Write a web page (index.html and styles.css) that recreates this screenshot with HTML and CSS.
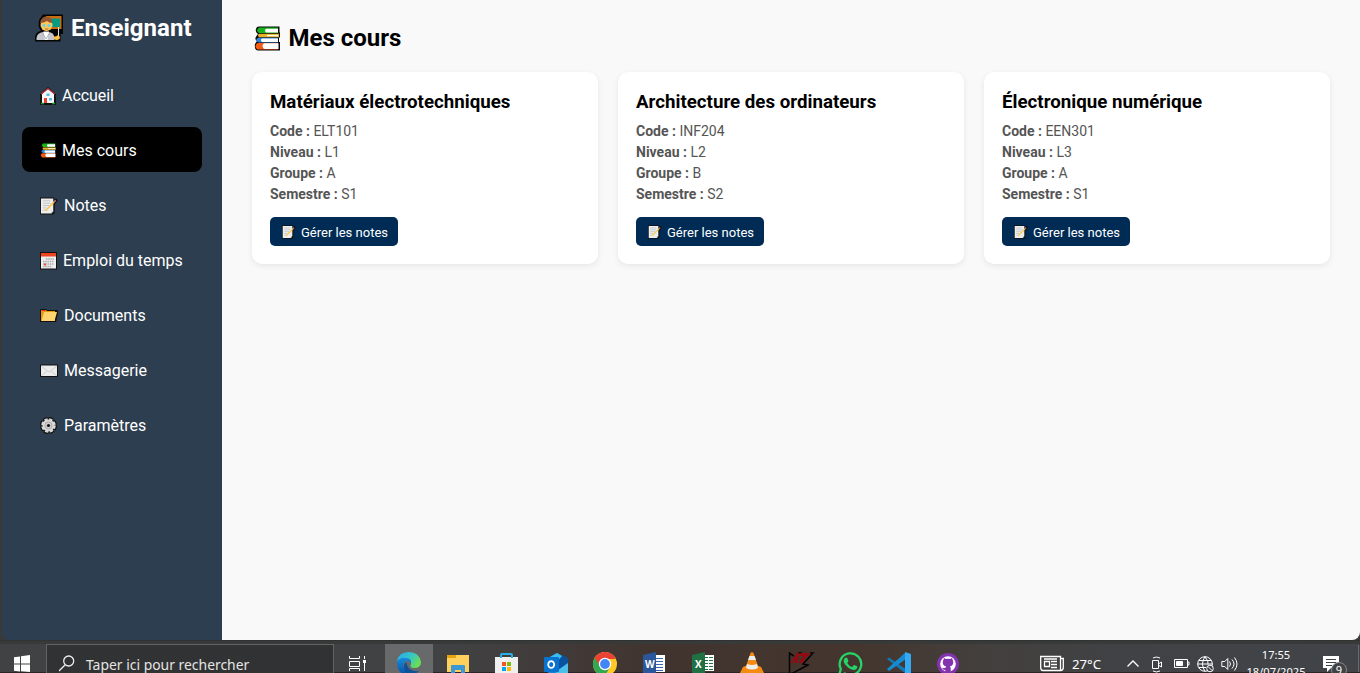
FILE: index.html
```html
<!DOCTYPE html>
<html lang="fr">
<head>
<meta charset="utf-8">
<title>Espace enseignant</title>
<link rel="stylesheet" href="styles.css">
</head>
<body>
<svg class="defs" width="0" height="0" aria-hidden="true">
  <symbol id="books" viewBox="0 0 27 27">
    <path d="M5 1.500H25.500V7.500H26V12.500H25V17H26V25.500H4Q0 25 1 19L3 16Q0 14 2.500 11L4 9Q0 6 3 2Z" fill="#080808"/>
    <path d="M5 2.500H24V8H5Q1 5.500 5 2.500Z" fill="#16b31b"/><path d="M12 3.700H24V7.400H12Q10 5.500 12 3.700Z" fill="#fff"/>
    <path d="M5 8.800H25V12.200H5Q3 10.500 5 8.800Z" fill="#e5b429"/><path d="M13 9.900H24V11.200H13Z" fill="#fffbe7"/>
    <path d="M4 12.700H24V17.500H5Q0 15.500 4 12.700Z" fill="#2d84da"/><path d="M8 13.500H24V16.900H8Q6 15 8 13.500Z" fill="#fff"/>
    <path d="M3.500 18H24V24.500H3.500Q-.5 21 3.500 18Z" fill="#f45b10"/><path d="M10 18.300H24.500V23.900H10Q7 21 10 18.300Z" fill="#fff"/>
  </symbol>
  <symbol id="note" viewBox="0 0 19 19">
    <path d="M0 .5H15V3L17 1.500 19 3.500 15.500 8V17L14 18.500H0Z" fill="#111"/>
    <path d="M1 1.500H14V15L12 17.500H1Z" fill="#eee"/>
    <path d="M3 4H11M3 6.500H11M3 9H10M3 11.500H7M3 14H6" stroke="#b9bec2" stroke-width=".9"/>
    <path d="M6 14.500 15 5" stroke="#fbc647" stroke-width="1.700"/><path d="m15 5 1.500-1.500" stroke="#b98780" stroke-width="1.700"/><path d="M12 17.500V15h2" fill="#bcbcbc"/>
  </symbol>
</svg>
<div class="screen">
  <div class="window">
    <aside class="sidebar">
      <div class="brand">
        <svg class="brand-icon" viewBox="0 0 28 28">
          <path d="M8 .5H28V20H25.500V27.500H0V23Q1 17.500 6 17Q2 12 4.500 5Z" fill="#050505"/>
          <path d="M11 2H26.500V15H11Z" fill="#c96c12"/><path d="M13 4.500H25V13H13Z" fill="#079b84"/>
          <path d="M1.500 26V24Q2 19 8 18L13 18Q19 18 19.500 24V26Z" fill="#c5c5ce"/>
          <path d="M8.500 17.500H14L12.500 26H10Z" fill="#fff"/><path d="m7.500 19 3.500 6 3.500-6" fill="none" stroke="#a0a3ac" stroke-width=".8"/>
          <circle cx="11.500" cy="11" r="6" fill="#ffc65b"/><path d="M5 9Q6 3 11 2.500Q17 2.500 17.500 9Q14 9 12 7Q9 9 5 9Z" fill="#93552e"/>
          <circle cx="9" cy="11.500" r="1.500" fill="#60d5ef"/><circle cx="14" cy="11.500" r="1.500" fill="#60d5ef"/><path d="M10 15h3.500" stroke="#b96623"/>
          <path d="M23.500 13V23" stroke="#d9e5df"/><path d="M18.500 22.500Q21 23 23 21L25 23Q25 26 21.500 26Q19 26 18.500 22.500Z" fill="#ffc342"/>
        </svg>
        <span>Enseignant</span>
      </div>
      <nav class="menu">
        <a class="item home"><svg viewBox="0 0 18 18"><path d="m0 7 8-7 8 7-.5 3H16v8H0V10Z" fill="#111"/><path d="M2 7 8 2l6 5v9H2Z" fill="#f6f5f8"/><path d="m1 7 7-5.500L15 7" fill="none" stroke="#b9333b" stroke-width="1.100"/><path d="M4 11h3v5H4Z" fill="#e34632"/><path d="M9 11h3v2.500H9ZM6.500 6.500h3V9h-3Z" fill="#53bdec"/><path d="M1 16.500h3M12 16.500h3" stroke="#189b2d" stroke-width="1.600"/></svg><span>Accueil</span></a>
        <a class="item active"><svg class="books-small"><use href="#books"/></svg><span>Mes cours</span></a>
        <a class="item wide"><svg><use href="#note"/></svg><span>Notes</span></a>
        <a class="item"><svg viewBox="0 0 18 18"><path d="M0 0H17V17.500H0Z" fill="#111"/><path d="M1 1H16V16.500H1Z" fill="#eee"/><path d="M1 1H16V4.500H1Z" fill="#ef4420"/><path d="M6 7h8M3 9.500h11M3 12h11M3 14.500h9" stroke="#aaa" stroke-width="1.500" stroke-dasharray="1.500 .7"/><path d="M4 11.500h2v2H4Z" fill="#ed5538"/></svg><span>Emploi du temps</span></a>
        <a class="item wide"><svg viewBox="0 0 18 18"><path d="M0 2.500 1 2h5l1 1h11v3l-2 9H0Z" fill="#111"/><path d="M1 3h5l1 1h8v10H1Z" fill="#e59b0d"/><path d="M1.500 3h4v1h-4" fill="#ee332a"/><path d="M4 5h13l-2.500 9H1.500Z" fill="#ffd36d"/></svg><span>Documents</span></a>
        <a class="item wide"><svg viewBox="0 0 18 18"><path d="M0 2.500H18V15H0Z" fill="#111"/><path d="M1 3.500H17V14H1Z" fill="#ececec"/><path d="m1 4 8 6 8-6M1 14l6-5m10 5-6-5" fill="none" stroke="#c6c6c6" stroke-width=".8"/></svg><span>Messagerie</span></a>
        <a class="item wide"><svg viewBox="0 0 18 18"><circle cx="8.500" cy="8.500" r="7" fill="#111" stroke="#111" stroke-width="3.200" stroke-dasharray="4.400 1.097"/><circle cx="8.500" cy="8.500" r="6" fill="#d9d9d9" stroke="#d9d9d9" stroke-width="2.600" stroke-dasharray="3.100 1.612"/><circle cx="8.500" cy="8.500" r="3.600" fill="#d0d0d0" stroke="#aaa"/><circle cx="8.500" cy="8.500" r="1.600" fill="#111"/></svg><span>Paramètres</span></a>
      </nav>
    </aside>
    <main class="content">
      <h1 class="title"><svg class="title-icon"><use href="#books"/></svg><span>Mes cours</span></h1>
      <section class="cards">
        <article class="card"><h2>Matériaux électrotechniques</h2><p><b>Code :</b> ELT101</p><p><b>Niveau :</b> L1</p><p><b>Groupe :</b> A</p><p><b>Semestre :</b> S1</p><button class="action"><svg><use href="#note"/></svg><span>Gérer les notes</span></button></article>
        <article class="card"><h2>Architecture des ordinateurs</h2><p><b>Code :</b> INF204</p><p><b>Niveau :</b> L2</p><p><b>Groupe :</b> B</p><p><b>Semestre :</b> S2</p><button class="action"><svg><use href="#note"/></svg><span>Gérer les notes</span></button></article>
        <article class="card"><h2>Électronique numérique</h2><p><b>Code :</b> EEN301</p><p><b>Niveau :</b> L3</p><p><b>Groupe :</b> A</p><p><b>Semestre :</b> S1</p><button class="action"><svg><use href="#note"/></svg><span>Gérer les notes</span></button></article>
      </section>
    </main>
  </div>
  <footer class="taskbar">
    <div class="start"><svg width="46" height="29" viewBox="0 0 46 29"><path d="m14 13.300 6-.8v7h-6Zm7-1 9-1.300v8.500h-9Zm-7 8.200h6v7l-6-.8Zm7 0h9V28l-9-.8Z" fill="#fff"/></svg></div>
    <div class="search"><svg width="18" height="18" viewBox="0 0 18 18" fill="none" stroke="#eee" stroke-width="1.300"><circle cx="9.700" cy="6" r="5"/><path d="m6 10-6 6"/></svg><span>Taper ici pour rechercher</span></div>
    <div class="view"><svg width="50" height="29" viewBox="0 0 50 29" fill="none" stroke="#fff" stroke-width="1"><path d="M16.500 12v2.500h10V12M16.500 27v-2.500h10V27M16.500 17.500h10v5h-10ZM31.500 12v3M31.500 19v8"/><path d="M30 16h3v3h-3Z" fill="#fff" stroke="none"/></svg></div>
    <div class="apps">
      <svg class="app current" viewBox="0 0 48 29"><defs><linearGradient id="edge-top" y2=".5"><stop stop-color="#27a7ee"/><stop offset=".55" stop-color="#35c5cc"/><stop offset="1" stop-color="#68df54"/></linearGradient><linearGradient id="edge-low" x2="0" y2="1"><stop stop-color="#198bdb"/><stop offset="1" stop-color="#0755a5"/></linearGradient></defs><path d="M12 18Q13 8 24 8Q34 8 36 18Q36 24 29 24Q24 24 26 20Q27 14 20 14Q15 14 12 18Z" fill="url(#edge-top)"/><path d="M12 18Q15 13 21 14Q27 15 26 19Q22 15 19 19Q16 26 26 30H18Q12 27 12 18Z" fill="url(#edge-low)"/><path d="M20 19Q17 24 22 30H30L34 27Q24 28 22 21Q22 18 20 19Z" fill="#0c529b"/></svg>
      <svg class="app" viewBox="0 0 48 29"><path d="M13 11h22v17H13Z" fill="#ffd15c"/><path d="M13 11h9v3h-9Z" fill="#e8a20c"/><path d="M17 29v-7q0-1 1-1h12q1 0 1 1v7h-4v-3h-6v3Z" fill="#3c98d5"/></svg>
      <svg class="app" viewBox="0 0 48 29"><path d="M12 13h23v16H12Z" fill="#efefef"/><path d="M18 14v-3q0-1 1-1h9q1 0 1 1v3" fill="none" stroke="#29aee9" stroke-width="2"/><path d="M19 18h4v4h-4Z" fill="#f35325"/><path d="M24 18h4v4h-4Z" fill="#81bc06"/><path d="M19 23h4v4h-4Z" fill="#05a6f0"/><path d="M24 23h4v4h-4Z" fill="#ffba08"/></svg>
      <svg class="app" viewBox="0 0 48 29"><path d="m16 14 9-5 11 6v14H16Z" fill="#1684cf"/><path d="m25 9 8 5-10 7-5-8Z" fill="#39bdf0"/><path d="m31 11 5 4v4l-9 6-4-5Z" fill="#0a519f"/><path d="m25 27 11-8v10H24Z" fill="#4cbeea"/><rect x="12" y="13" width="15" height="15" rx="1" fill="#0873cf"/><ellipse cx="19.200" cy="20.500" rx="3" ry="3.400" fill="none" stroke="#fff" stroke-width="1.800"/></svg>
      <svg class="app" viewBox="0 0 48 29"><circle cx="24" cy="20" r="12" fill="#ffca28"/><path d="M24 20 13.600 14A12 12 0 0 0 24 32l5-9Z" fill="#32a852"/><path d="M13.600 14 19 22l5-7h10.900A12 12 0 0 0 13.600 14Z" fill="#ea4335"/><circle cx="24" cy="20" r="6.200" fill="#fff"/><circle cx="24" cy="20" r="4.900" fill="#4285f4"/></svg>
      <svg class="app" viewBox="0 0 48 29"><path d="M24 11h11v17H24Z" fill="#fff"/><path d="M26 14.500h7M26 17.500h7M26 20.500h7M26 23.500h7M26 26.500h7" stroke="#3765b3"/><path d="m13 11 13-3v21H13Z" fill="#2b579a"/><text x="15" y="24" class="office-letter">W</text></svg>
      <svg class="app" viewBox="0 0 48 29"><path d="M24 11h11v16H24Z" fill="#fff"/><path d="M26 13.500h3M30 13.500h4M26 16.500h3M30 16.500h4M26 19.500h3M30 19.500h4M26 22.500h3M30 22.500h4M26 25.500h3M30 25.500h4" stroke="#207245" stroke-width="1.200"/><path d="m13 11 13-3v21H13Z" fill="#207245"/><text x="16" y="24" class="office-letter">X</text></svg>
      <svg class="app" viewBox="0 0 48 29"><path d="m17 22-2 1-3 6h24l-3-6-2-1Z" fill="#f68b12"/><path d="m22.500 9 1.500-1 1.500 1 5.500 16q-7 3-14 0Z" fill="#f58a16"/><path d="m21.500 12h5l1.500 4h-8ZM19 20q5 2 10 0l1 4q-6 3-12 0Z" fill="#eee"/></svg>
      <svg class="app" viewBox="0 0 48 29"><path d="M12.500 8v22M12 9l5 3M21 9h4M33 9h3L26 20l5 1-17 9" fill="none" stroke="#050505" stroke-width="1.500"/><path d="M19 9h3.500l-2 10h-3.500l1-3h-1.500L15 19h-2.500l6-7ZM23.500 9h10l-2 3h-1.500l-4.500 7h-4l5-7h-4Z" fill="#950911"/></svg>
      <svg class="app" viewBox="0 0 48 29"><path d="m13.200 31 1.600-6A10.800 10.800 0 1 1 19 29.500Z" fill="none" stroke="#25d366" stroke-width="2.300"/><path d="M19 14q1.700-1 2.500.5l1 2.700-1.300 1.800q2 3.500 5 4l1.700-2q1-.3 3.600 1.500-.3 3-3 3.500-4 0-8-4-5-5-1.500-8Z" fill="#25d366"/></svg>
      <svg class="app" viewBox="0 0 48 29"><path d="m12 15 2-1.500L32 26v3h-2Z" fill="#1378b8"/><path d="m12 25 2 2L31 15V8Z" fill="#168bd0"/><path d="m30 8 6 2v19h-6Z" fill="#35aaf2"/></svg>
      <svg class="app" viewBox="0 0 48 29"><circle cx="24" cy="20" r="11" fill="#8433ae"/><circle cx="24" cy="20" r="7.800" fill="#fff"/><path d="M19.500 15.500 20 14l2 1q2-.4 4 0l2-1 .5 1.500q1.500 2.500.3 5Q28 22 26 22.300q1 1 .7 6h-5.400v-2.500q-2.500.5-3.300-2 2 .5 3.300.2l.7-1.700q-2-.3-2.800-1.800-1.200-2.500.3-5Z" fill="#8433ae"/></svg>
    </div>
    <div class="tray">
      <div class="weather"><svg width="24" height="17" viewBox="0 0 24 17" fill="none" stroke="#fff"><path d="M.7 1.500h19.800v14H3q-2.300 0-2.300-3ZM20.500 3.500h2.800v9q0 3-3 3M4.500 6.500h5v5h-5ZM4 4h13M11 6.500h6M11 9.500h6M11 12.500h6" stroke-width="1.300"/></svg><span>27°C</span></div>
      <svg class="chevron" width="12" height="12" viewBox="0 0 12 12" fill="none" stroke="#fff" stroke-width="1.300"><path d="m.5 8.500 5.500-5.500 5.500 5.500"/></svg>
      <svg class="meet" width="12" height="17" viewBox="0 0 12 17" fill="none" stroke="#fff"><path d="M1.500 4.500h6v8h-6ZM8 7.500l2.500-1.500v5L8 9.500M2 2q3.500-2 7 0M2 15q3.500 2 7 0"/></svg>
      <svg class="battery" width="16" height="12" viewBox="0 0 16 12" fill="none" stroke="#fff"><path d="M.5 2.500h13v8H.5ZM14 5h1v3h-1"/><path d="M2.500 4.500h6v4h-6Z" fill="#fff"/></svg>
      <svg class="globe" width="17" height="17" viewBox="0 0 17 17" fill="none" stroke="#fff"><circle cx="8" cy="8" r="7.300"/><path d="M.7 8h15M2 4.500h12M2 11.500h7M8 .7q-5 7.300 0 14.600M8 .7q4 5 3 8"/><circle cx="13" cy="12.500" r="3.300" fill="#404245"/><path d="m11 10.500 4 4"/></svg>
      <svg class="sound" width="17" height="16" viewBox="0 0 17 16" fill="none" stroke="#fff"><path d="M.8 5.500h3l3-3v11l-3-3h-3ZM8.500 5.500q2 2.500 0 5M11 3.500q4 4.500 0 9M13.500 1.500q5 6.500 0 13"/></svg>
      <div class="clock"><span>17:55</span><span>18/07/2025</span></div>
      <div class="notice"><svg width="25" height="20" viewBox="0 0 25 20"><path d="M0 0h16v12H8l-4 4v-4H0Z" fill="#fff"/><path d="M3 3.500h10M3 6.500h10M3 9.500h6" stroke="#404346"/></svg><span class="badge">9</span></div>
    </div>
  </footer>
</div>
</body>
</html>
```

FILE: styles.css
```css
* { box-sizing: border-box; }
body { margin: 0; font-family: Roboto, "Open Sans", sans-serif; }
.defs { position: absolute; }
.screen { width: 1360px; height: 673px; overflow: hidden; display: flex; flex-direction: column; background: #383a3a; }
.window { height: 640px; margin-left: 2px; display: flex; overflow: hidden; border-radius: 0 0 8px 8px; background: linear-gradient(90deg, #2d3e50 100px, #f9f9f9 100px); }
.sidebar { width: 220px; flex: none; padding: 12px 20px 0; background: #2d3e50; color: #fff; }
.brand { height: 32px; display: flex; align-items: center; padding-left: 13px; font-size: 24px; font-weight: 700; }
.brand-icon { width: 28px; height: 28px; margin-right: 8px; }
.brand span { letter-spacing: .05px; }
.menu { display: flex; flex-direction: column; gap: 10px; margin-top: 28px; }
.item { height: 45px; padding: 2px 18px 0; display: flex; align-items: center; font-size: 16px; border-radius: 8px; white-space: nowrap; }
.item svg { width: 18px; height: 18px; margin-right: 5px; flex: none; }
.item .books-small { width: 17px; height: 17px; }
.home svg { margin-right: 4px; }
.home span { letter-spacing: -.05px; }
.wide svg { margin-right: 6px; }
.active { background: #000; }
.content { flex: 1; padding: 20px 30px; }
.title { margin: 0; height: 36px; display: flex; align-items: center; font-size: 24px; color: #000; padding-left: 2px; }
.title-icon { width: 27px; height: 27px; margin-right: 7.500px; }
.cards { display: grid; grid-template-columns: repeat(3, 1fr); gap: 20px; margin-top: 16px; }
.card { height: 192px; padding: 18px; background: #fff; border-radius: 10px; box-shadow: 0 2px 6px rgba(0, 0, 0, .08); }
.card h2 { margin: 0 0 7px; font-size: 18.72px; line-height: 24px; color: #000; }
.card p { margin: 0; font-size: 14px; line-height: 21px; color: #555; }
.action { display: flex; align-items: center; width: 128px; height: 29px; margin-top: 12px; padding: 1px 0 0 12px; border: 0; border-radius: 5px; background: #002b55; color: #fff; font: 13px Roboto, sans-serif; white-space: nowrap; }
.action svg { width: 14px; height: 14px; margin-right: 5px; flex: none; }
.taskbar { height: 33px; padding-top: 4px; display: flex; border-top: 1px solid #303332; border-bottom: 1px solid #2c2426; background: linear-gradient(90deg, #404244 0, #414244 33%, #41342f 48%, #44362e 63%, #43403e 73%, #404246 84%, #414448 100%); color: #fff; font-family: "Noto Sans", "Open Sans", sans-serif; box-shadow: inset 0 3px #373a38; }
.taskbar svg { display: block; flex: none; }
.start { width: 46px; margin-top: -1px; }
.search { width: 288px; height: 30px; margin-top: -1px; padding: 10px 0 0 12px; display: flex; border: 1px solid #626464; background: #313233; color: #e4e4e4; }
.search span { margin-left: 9px; margin-top: 1px; font-size: 13.920px; line-height: 18px; white-space: nowrap; }
.view { width: 51px; margin-top: -1px; }
.view svg { margin-left: -1px; }
.apps { display: flex; gap: 1px; margin-top: -1px; }
.app { width: 48px; height: 29px; }
.current { background: #68696b; }
.office-letter { fill: #fff; font: bold 10px "Open Sans", sans-serif; }
.tray { display: flex; flex: 1; padding-left: 68px; }
.weather { display: flex; width: 87px; padding-top: 10px; }
.weather span { margin-left: 8px; margin-top: 1px; font-size: 13.200px; line-height: 17px; }
.chevron { margin-top: 13px; margin-right: 12px; }
.meet { margin-top: 11px; margin-right: 11px; }
.battery { margin-top: 12px; margin-right: 7px; }
.globe { margin-top: 11px; margin-right: 7px; }
.sound { margin-top: 11px; }
.clock { width: 76px; display: flex; flex-direction: column; align-items: center; font-size: 11.100px; line-height: 17px; padding-top: 1px; white-space: nowrap; }
.notice { position: relative; margin-left: 9px; padding-top: 11px; width: 36px; border-right: 1px solid #696b6c; }
.badge { position: absolute; left: 8px; top: 17px; width: 16px; height: 16px; border-radius: 50%; border: 1px solid #888; background: #404346; text-align: center; font-size: 11px; line-height: 14px; }
```
